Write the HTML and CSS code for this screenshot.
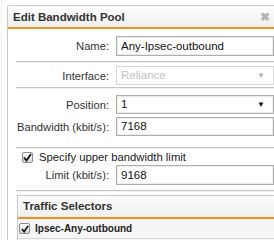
FILE: index.html
```html
<!DOCTYPE html>
<html lang="en">
<head>
    <meta charset="UTF-8">
    <title>Edit Bandwidth Pool</title>
    <link rel="stylesheet" href="styles.css">
</head>
<body>
    <div class="page">
        <div class="dialog">
            <div class="dialog-head">
                <span class="title">Edit Bandwidth Pool</span>
                <span class="close">&#x2716;</span>
            </div>
            <div class="dialog-body">
                <div class="row row-name">
                    <label>Name:</label>
                    <div class="field">Any-Ipsec-outbound</div>
                </div>
                <div class="sep sep-1"></div>
                <div class="row row-iface">
                    <label>Interface:</label>
                    <div class="field select disabled">Reliance<span class="arrow">&#x25BC;</span></div>
                </div>
                <div class="sep sep-2"></div>
                <div class="row row-pos">
                    <label>Position:</label>
                    <div class="field select">1<span class="arrow">&#x25BC;</span></div>
                </div>
                <div class="row row-bw">
                    <label>Bandwidth (kbit/s):</label>
                    <div class="field">7168</div>
                </div>
                <div class="sep sep-3"></div>
                <div class="check-row">
                    <span class="check">
                        <svg width="9" height="9" viewBox="0 0 9 9"><path d="M1 4.5 L3.5 7.5 L8 1" fill="none" stroke="#111" stroke-width="1.8"/></svg>
                    </span>
                    <span>Specify upper bandwidth limit</span>
                </div>
                <div class="row row-limit">
                    <label>Limit (kbit/s):</label>
                    <div class="field">9168</div>
                </div>
                <div class="sep sep-4"></div>
                <div class="selectors">
                    <div class="sel-head">Traffic Selectors</div>
                    <div class="sel-row">
                        <span class="check small">
                            <svg width="8" height="8" viewBox="0 0 9 9"><path d="M1 4.5 L3.5 7.5 L8 1" fill="none" stroke="#111" stroke-width="1.9"/></svg>
                        </span>
                        <span class="sel-name">Ipsec-Any-outbound</span>
                    </div>
                    <div class="sel-row empty"></div>
                </div>
            </div>
        </div>
    </div>
</body>
</html>
```

FILE: styles.css
```css
body {
    margin: 0;
    background-color: #fff;
    font-family: "Liberation Sans", Arial, sans-serif;
    font-size: 11px;
    color: #222;
    overflow: hidden;
}

.page {
    height: 240px;
    padding: 5px 0 0 5px;
    border-left: 1px dotted #e2e2e2;
    margin-left: 1px;
    box-sizing: border-box;
    overflow: hidden;
}

.dialog {
    border: 1px solid #c9c9c9;
    border-right: none;
    border-bottom: none;
    border-top-left-radius: 3px;
}

.dialog-head {
    display: flex;
    justify-content: space-between;
    align-items: center;
    height: 21px;
    padding: 0 4px 0 5px;
    background: linear-gradient(#fdfdfd, #f0f0f0);
    border-bottom: 2px solid #f0911c;
}

.title {
    font-weight: bold;
    font-size: 11.5px;
    color: #333;
}

.close {
    font-size: 12px;
    color: #b5b5b5;
    font-weight: bold;
}

.dialog-body {
    padding-left: 8px;
}

.row {
    display: flex;
    align-items: center;
}

.row label {
    width: 93px;
    text-align: right;
    padding-right: 7px;
    color: #333;
    font-size: 11.2px;
}

.field {
    flex: 1;
    height: 17px;
    line-height: 17px;
    border: 1px solid #aeaeae;
    box-shadow: inset 0 0 0 1px #ececec;
    padding-left: 4px;
    color: #111;
    font-size: 11.5px;
    background: #fff;
    position: relative;
}

.select .arrow {
    position: absolute;
    right: 8px;
    top: 0;
    font-size: 8px;
    color: #111;
}

.select.disabled {
    color: #c4c4c4;
    border-color: #d6d6d6;
    box-shadow: none;
}

.select.disabled .arrow {
    color: #b0b0b0;
}

.row-name { margin-top: 7px; }
.row-name .field { height: 18px; line-height: 18px; }
.row-iface { margin-top: 3px; }
.row-pos { margin-top: 6px; }
.row-bw { margin-top: 3px; }
.row-limit { margin-top: 2px; }
.row-limit .field { height: 18px; line-height: 18px; }

.sep {
    height: 1px;
    background-color: #c4c4c4;
    border-bottom: 1px solid #f2f2f2;
}

.sep-1 { margin: 5px 0 0 0; }
.sep-2 { margin: 2px 0 0 0; }
.sep-3 { margin: 11px 0 0 0; }
.sep-4 { margin: 5px 0 0 0; }

.check-row {
    display: flex;
    align-items: center;
    gap: 6px;
    margin: 2px 0 0 6px;
    font-size: 11.3px;
    color: #222;
}

.check {
    width: 9px;
    height: 9px;
    border: 1px solid #8c8c8c;
    border-radius: 2px;
    background: linear-gradient(#fafafa, #d8d8d8);
    display: flex;
    align-items: center;
    justify-content: center;
}

.selectors {
    margin: 3px 0 0 1px;
    border: 1px solid #c9c9c9;
    border-right: none;
}

.sel-head {
    height: 21px;
    line-height: 21px;
    padding-left: 5px;
    font-weight: bold;
    font-size: 11.5px;
    color: #333;
    background: linear-gradient(#fdfdfd, #efefef);
    border-bottom: 2px solid #f0911c;
}

.sel-row {
    display: flex;
    align-items: center;
    gap: 5px;
    height: 19px;
    padding-left: 1px;
    background-color: #f5f5f5;
    border-bottom: 1px solid #dadada;
}

.sel-name {
    font-weight: bold;
    font-size: 10px;
    color: #222;
}
```
